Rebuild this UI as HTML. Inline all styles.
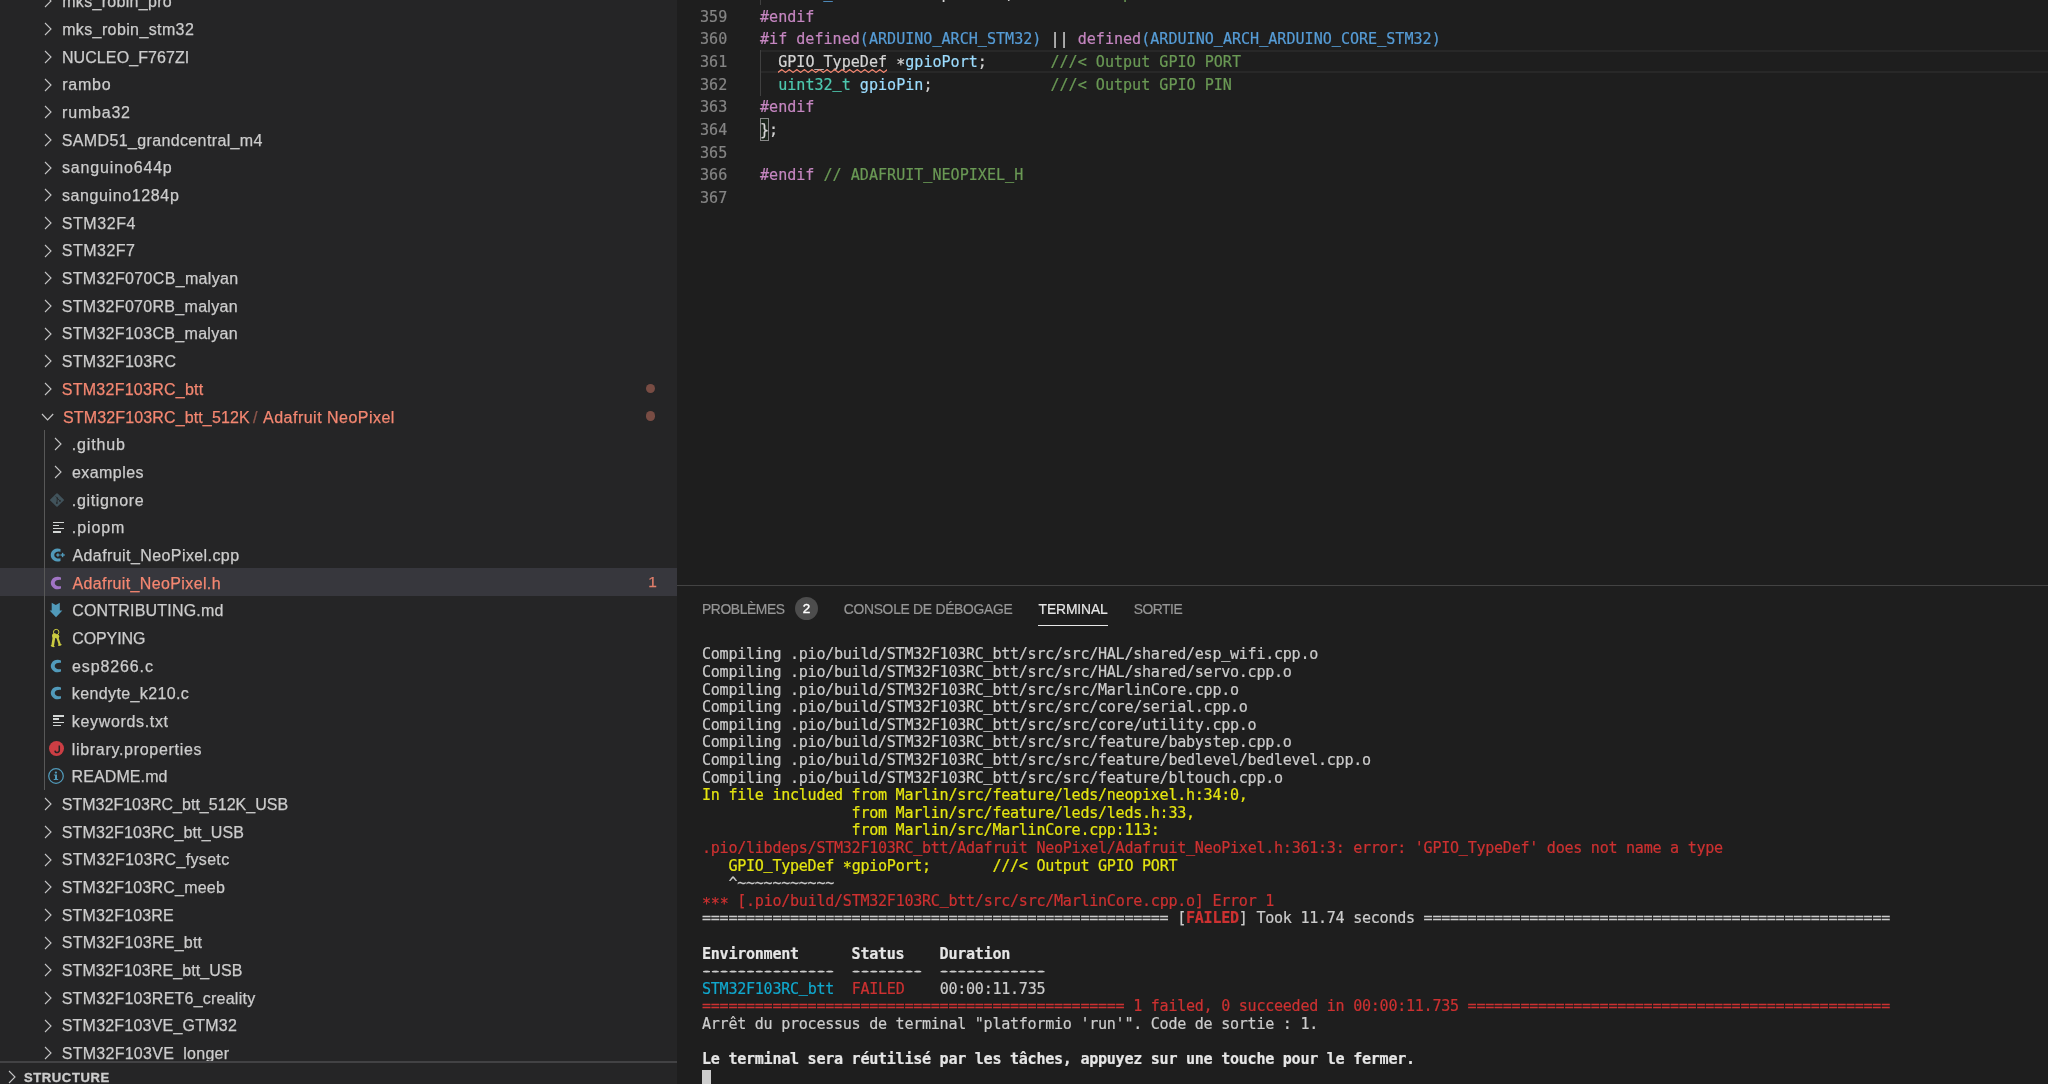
<!DOCTYPE html>
<html lang="fr"><head><meta charset="utf-8"><title>Adafruit_NeoPixel.h</title>
<style>
html,body{margin:0;padding:0;background:#1e1e1e}
body{width:2048px;height:1084px;overflow:hidden;position:relative;font-family:"Liberation Sans",sans-serif;-webkit-font-smoothing:antialiased}
.ab{position:absolute;white-space:pre}
#sbbg{position:absolute;left:0;top:0;width:677px;height:1084px;background:#252526}
#sb{position:absolute;left:0;top:0;width:677px;height:1084px;overflow:hidden;will-change:transform}
#sbl{position:absolute;left:0;top:0;width:677px;height:1061.2px;overflow:hidden}
#ed{position:absolute;left:677px;top:0;width:1371px;height:585px;overflow:hidden;will-change:transform}
#edi,#pni{position:absolute;left:-677px;top:0;width:2048px;height:1084px}
#pn{position:absolute;left:677px;top:0;width:1371px;height:1084px;overflow:hidden;will-change:transform}
.lbl{font-size:16.0px;height:27.68px;line-height:27.68px;margin-top:1.4px;-webkit-text-stroke:0.25px currentColor}
.ic{font-family:"DejaVu Sans","Liberation Sans",sans-serif}
.ln{margin-top:0.8px;-webkit-text-stroke:0.2px currentColor;font-family:"DejaVu Sans Mono","Liberation Mono",monospace;font-size:15.09px;line-height:22.63px;height:22.63px;text-align:right;letter-spacing:-0.05px}
.cl{margin-top:0.8px;-webkit-text-stroke:0.2px currentColor;font-family:"DejaVu Sans Mono","Liberation Mono",monospace;font-size:15.09px;line-height:22.63px;height:22.63px;letter-spacing:-0.003px}
.tl{-webkit-text-stroke:0.2px currentColor;font-family:"DejaVu Sans Mono","Liberation Mono",monospace;font-size:15.09px;line-height:17.60px;height:17.60px;letter-spacing:-0.278px}
.tl b{font-weight:700}
.u{position:relative;top:-1.5px}
.as{position:relative;top:2.8px}
.hy{text-shadow:1.5px 0 0 currentColor,-1.5px 0 0 currentColor}
.tab{font-size:13.83px;height:27.7px;line-height:27.7px;margin-top:1px;-webkit-text-stroke:0.2px currentColor}
</style></head>
<body>
<div id="sbbg"></div>
<div id="sb"><div id="sbl">
<div class="ab" style="left:0;top:568.20px;width:677px;height:27.68px;background:#37373d"></div>
<div class="ab" style="left:43.9px;top:429.80px;width:1.25px;height:359.84px;background:#585858"></div>
<div class="ab lbl" style="left:62.22px;top:-13.08px;color:#cccccc;letter-spacing:0.310px">mks_robin_pro</div>
<svg class="ab" style="left:44.35px;top:-5.54px" width="8.00" height="14.00" viewBox="-1 -1 8.00 14.00"><path d="M0 0 L6.00 6.00 L0 12.00" fill="none" stroke="#c5c5c5" stroke-width="1.1"/></svg>
<div class="ab lbl" style="left:62.15px;top:14.60px;color:#cccccc;letter-spacing:0.384px">mks_robin_stm32</div>
<svg class="ab" style="left:44.35px;top:22.14px" width="8.00" height="14.00" viewBox="-1 -1 8.00 14.00"><path d="M0 0 L6.00 6.00 L0 12.00" fill="none" stroke="#c5c5c5" stroke-width="1.1"/></svg>
<div class="ab lbl" style="left:61.95px;top:42.28px;color:#cccccc;letter-spacing:0.091px">NUCLEO_F767ZI</div>
<svg class="ab" style="left:44.35px;top:49.82px" width="8.00" height="14.00" viewBox="-1 -1 8.00 14.00"><path d="M0 0 L6.00 6.00 L0 12.00" fill="none" stroke="#c5c5c5" stroke-width="1.1"/></svg>
<div class="ab lbl" style="left:62.16px;top:69.96px;color:#cccccc;letter-spacing:0.763px">rambo</div>
<svg class="ab" style="left:44.35px;top:77.50px" width="8.00" height="14.00" viewBox="-1 -1 8.00 14.00"><path d="M0 0 L6.00 6.00 L0 12.00" fill="none" stroke="#c5c5c5" stroke-width="1.1"/></svg>
<div class="ab lbl" style="left:62.12px;top:97.64px;color:#cccccc;letter-spacing:0.791px">rumba32</div>
<svg class="ab" style="left:44.35px;top:105.18px" width="8.00" height="14.00" viewBox="-1 -1 8.00 14.00"><path d="M0 0 L6.00 6.00 L0 12.00" fill="none" stroke="#c5c5c5" stroke-width="1.1"/></svg>
<div class="ab lbl" style="left:61.74px;top:125.32px;color:#cccccc;letter-spacing:0.367px">SAMD51_grandcentral_m4</div>
<svg class="ab" style="left:44.35px;top:132.86px" width="8.00" height="14.00" viewBox="-1 -1 8.00 14.00"><path d="M0 0 L6.00 6.00 L0 12.00" fill="none" stroke="#c5c5c5" stroke-width="1.1"/></svg>
<div class="ab lbl" style="left:61.91px;top:153.00px;color:#cccccc;letter-spacing:0.848px">sanguino644p</div>
<svg class="ab" style="left:44.35px;top:160.54px" width="8.00" height="14.00" viewBox="-1 -1 8.00 14.00"><path d="M0 0 L6.00 6.00 L0 12.00" fill="none" stroke="#c5c5c5" stroke-width="1.1"/></svg>
<div class="ab lbl" style="left:61.90px;top:180.68px;color:#cccccc;letter-spacing:0.621px">sanguino1284p</div>
<svg class="ab" style="left:44.35px;top:188.22px" width="8.00" height="14.00" viewBox="-1 -1 8.00 14.00"><path d="M0 0 L6.00 6.00 L0 12.00" fill="none" stroke="#c5c5c5" stroke-width="1.1"/></svg>
<div class="ab lbl" style="left:61.73px;top:208.36px;color:#cccccc;letter-spacing:0.572px">STM32F4</div>
<svg class="ab" style="left:44.35px;top:215.90px" width="8.00" height="14.00" viewBox="-1 -1 8.00 14.00"><path d="M0 0 L6.00 6.00 L0 12.00" fill="none" stroke="#c5c5c5" stroke-width="1.1"/></svg>
<div class="ab lbl" style="left:61.74px;top:236.04px;color:#cccccc;letter-spacing:0.503px">STM32F7</div>
<svg class="ab" style="left:44.35px;top:243.58px" width="8.00" height="14.00" viewBox="-1 -1 8.00 14.00"><path d="M0 0 L6.00 6.00 L0 12.00" fill="none" stroke="#c5c5c5" stroke-width="1.1"/></svg>
<div class="ab lbl" style="left:61.72px;top:263.72px;color:#cccccc;letter-spacing:0.339px">STM32F070CB_malyan</div>
<svg class="ab" style="left:44.35px;top:271.26px" width="8.00" height="14.00" viewBox="-1 -1 8.00 14.00"><path d="M0 0 L6.00 6.00 L0 12.00" fill="none" stroke="#c5c5c5" stroke-width="1.1"/></svg>
<div class="ab lbl" style="left:61.73px;top:291.40px;color:#cccccc;letter-spacing:0.303px">STM32F070RB_malyan</div>
<svg class="ab" style="left:44.35px;top:298.94px" width="8.00" height="14.00" viewBox="-1 -1 8.00 14.00"><path d="M0 0 L6.00 6.00 L0 12.00" fill="none" stroke="#c5c5c5" stroke-width="1.1"/></svg>
<div class="ab lbl" style="left:61.74px;top:319.08px;color:#cccccc;letter-spacing:0.302px">STM32F103CB_malyan</div>
<svg class="ab" style="left:44.35px;top:326.62px" width="8.00" height="14.00" viewBox="-1 -1 8.00 14.00"><path d="M0 0 L6.00 6.00 L0 12.00" fill="none" stroke="#c5c5c5" stroke-width="1.1"/></svg>
<div class="ab lbl" style="left:61.72px;top:346.76px;color:#cccccc;letter-spacing:0.308px">STM32F103RC</div>
<svg class="ab" style="left:44.35px;top:354.30px" width="8.00" height="14.00" viewBox="-1 -1 8.00 14.00"><path d="M0 0 L6.00 6.00 L0 12.00" fill="none" stroke="#c5c5c5" stroke-width="1.1"/></svg>
<div class="ab lbl" style="left:61.77px;top:374.44px;color:#f48771;letter-spacing:0.258px">STM32F103RC_btt</div>
<svg class="ab" style="left:44.35px;top:381.98px" width="8.00" height="14.00" viewBox="-1 -1 8.00 14.00"><path d="M0 0 L6.00 6.00 L0 12.00" fill="none" stroke="#c5c5c5" stroke-width="1.1"/></svg>
<div class="ab lbl" style="left:63.05px;top:402.12px;color:#f48771;letter-spacing:0.132px">STM32F103RC_btt_512K</div>
<svg class="ab" style="left:41.30px;top:412.96px" width="13.20" height="7.80" viewBox="-1 -1 13.20 7.80"><path d="M0 0 L5.60 5.80 L11.20 0" fill="none" stroke="#c5c5c5" stroke-width="1.2"/></svg>
<div class="ab lbl" style="left:253.0px;top:402.12px;color:#f48771;opacity:.5">/</div>
<div class="ab lbl" style="left:263.08px;top:402.12px;color:#f48771;letter-spacing:0.479px">Adafruit NeoPixel</div>
<div class="ab lbl" style="left:71.77px;top:429.80px;color:#cccccc;letter-spacing:0.850px">.github</div>
<svg class="ab" style="left:53.90px;top:437.34px" width="8.00" height="14.00" viewBox="-1 -1 8.00 14.00"><path d="M0 0 L6.00 6.00 L0 12.00" fill="none" stroke="#c5c5c5" stroke-width="1.1"/></svg>
<div class="ab lbl" style="left:72.04px;top:457.48px;color:#cccccc;letter-spacing:0.420px">examples</div>
<svg class="ab" style="left:53.90px;top:465.02px" width="8.00" height="14.00" viewBox="-1 -1 8.00 14.00"><path d="M0 0 L6.00 6.00 L0 12.00" fill="none" stroke="#c5c5c5" stroke-width="1.1"/></svg>
<div class="ab lbl" style="left:71.78px;top:485.16px;color:#cccccc;letter-spacing:0.668px">.gitignore</div>
<svg class="ab" style="left:48.50px;top:491.80px" width="16" height="16" viewBox="-8 -8 16 16"><rect x="-5.1" y="-5.1" width="10.2" height="10.2" rx="0.9" transform="scale(1.03 0.97) rotate(45)" fill="#41535b"/><path d="M-1.3 -3.6 L0.4 -1.9 L-0.1 3.0 M0.4 -1.4 L2.9 0.7" stroke="#252526" stroke-width="0.85" fill="none"/><circle cx="-0.1" cy="3.1" r="0.85" fill="#252526"/><circle cx="3.0" cy="0.9" r="0.85" fill="#252526"/><circle cx="0.4" cy="-1.8" r="0.8" fill="#252526"/></svg>
<div class="ab lbl" style="left:71.76px;top:512.84px;color:#cccccc;letter-spacing:0.935px">.piopm</div>
<div class="ab" style="left:53.40px;top:521.68px;width:10.5px;height:1.3px;background:#d4d7d6"></div><div class="ab" style="left:53.40px;top:524.68px;width:5.9px;height:1.3px;background:#d4d7d6"></div><div class="ab" style="left:53.40px;top:527.88px;width:10.5px;height:1.3px;background:#d4d7d6"></div><div class="ab" style="left:53.40px;top:531.28px;width:7.5px;height:1.3px;background:#d4d7d6"></div>
<div class="ab lbl" style="left:72.47px;top:540.52px;color:#cccccc;letter-spacing:0.414px">Adafruit_NeoPixel.cpp</div>
<svg class="ab" style="left:46.50px;top:544.66px" width="20" height="20" viewBox="-10 -10 20 20"><path d="M3.5 -5.9 A6.8 6.55 0 1 0 3.5 5.9 L3.5 3.3 A4.6 3.55 0 1 1 3.5 -3.3 Z" transform="translate(0 0)" fill="#519aba"/><rect x="-0.80" y="-0.65" width="3.4" height="1.3" fill="#519aba"/><rect x="0.25" y="-1.70" width="1.3" height="3.4" fill="#519aba"/><rect x="3.45" y="-0.70" width="4.3" height="1.4" fill="#519aba"/><rect x="4.90" y="-2.15" width="1.4" height="4.3" fill="#519aba"/></svg>
<div class="ab lbl" style="left:72.51px;top:568.20px;color:#f48771;letter-spacing:0.369px">Adafruit_NeoPixel.h</div>
<svg class="ab" style="left:46.15px;top:572.64px" width="20" height="20" viewBox="-10 -10 20 20"><path d="M5 -5.6 A7 6.3 0 1 0 5 5.6 L5 3.2 A5 3.32 0 1 1 5 -3.2 Z" fill="#a074c4"/></svg>
<div class="ab lbl" style="left:72.16px;top:595.88px;color:#cccccc;letter-spacing:0.201px">CONTRIBUTING.md</div>
<svg class="ab" style="left:48.40px;top:602.22px" width="16" height="16" viewBox="-8 -8 16 16"><path d="M-4.3 -7.2 L-0.2 -5 L3.8 -7.2 L3.8 0.4 L6.4 0.4 L0 7.2 L-6.4 0.4 L-4.3 0.4 Z" fill="#519aba"/></svg>
<div class="ab lbl" style="left:72.17px;top:623.56px;color:#cccccc;letter-spacing:-0.071px">COPYING</div>
<svg class="ab" style="left:48.40px;top:627.70px" width="16" height="20" viewBox="-8 -10 16 20"><circle cx="0.2" cy="-5.9" r="2.75" fill="none" stroke="#cbcb41" stroke-width="1.0"/><circle cx="-1.5" cy="-2.2" r="2.5" fill="#cbcb41"/><circle cx="1.3" cy="-1.6" r="2.0" fill="#cbcb41"/><path d="M-1.9 -1.5 L-3.3 7.4" stroke="#cbcb41" stroke-width="2.7" stroke-linecap="round" fill="none"/><path d="M1.2 -1.0 L3.8 6.6" stroke="#cbcb41" stroke-width="2.2" stroke-linecap="round" fill="none"/><path d="M-4.6 7.6 L-2 8.6 M2.6 7.2 L5.0 6.6" stroke="#cbcb41" stroke-width="1.3" stroke-linecap="round" fill="none"/></svg>
<div class="ab lbl" style="left:72.05px;top:651.24px;color:#cccccc;letter-spacing:0.878px">esp8266.c</div>
<svg class="ab" style="left:46.15px;top:655.68px" width="20" height="20" viewBox="-10 -10 20 20"><path d="M5 -5.6 A7 6.3 0 1 0 5 5.6 L5 3.2 A5 3.32 0 1 1 5 -3.2 Z" fill="#519aba"/></svg>
<div class="ab lbl" style="left:71.77px;top:678.92px;color:#cccccc;letter-spacing:0.383px">kendyte_k210.c</div>
<svg class="ab" style="left:46.15px;top:683.36px" width="20" height="20" viewBox="-10 -10 20 20"><path d="M5 -5.6 A7 6.3 0 1 0 5 5.6 L5 3.2 A5 3.32 0 1 1 5 -3.2 Z" fill="#519aba"/></svg>
<div class="ab lbl" style="left:71.77px;top:706.60px;color:#cccccc;letter-spacing:0.666px">keywords.txt</div>
<div class="ab" style="left:53.40px;top:715.44px;width:10.5px;height:1.3px;background:#d4d7d6"></div><div class="ab" style="left:53.40px;top:718.44px;width:5.9px;height:1.3px;background:#d4d7d6"></div><div class="ab" style="left:53.40px;top:721.64px;width:10.5px;height:1.3px;background:#d4d7d6"></div><div class="ab" style="left:53.40px;top:725.04px;width:7.5px;height:1.3px;background:#d4d7d6"></div>
<div class="ab lbl" style="left:71.75px;top:734.28px;color:#cccccc;letter-spacing:0.694px">library.properties</div>
<div class="ab" style="left:48.90px;top:740.92px;width:15.2px;height:15.2px;border-radius:50%;background:#cc3e44"></div><svg class="ab" style="left:48.50px;top:740.52px" width="16" height="16" viewBox="-8 -8 16 16"><path d="M2.3 -3.5 L2.3 1.3 A2.1 2.1 0 0 1 -2.0 1.6" fill="none" stroke="#252526" stroke-width="1.5"/></svg>
<div class="ab lbl" style="left:71.53px;top:761.96px;color:#cccccc;letter-spacing:0.103px">README.md</div>
<svg class="ab" style="left:46.90px;top:767.00px" width="18" height="18" viewBox="-9 -9 18 18"><circle cx="0" cy="0" r="7.3" fill="none" stroke="#519aba" stroke-width="1.25"/><circle cx="-0.1" cy="-3.4" r="1.15" fill="#519aba"/><path d="M-2.1 -1.5 L1.0 -1.5 L1.0 3.0 L2.2 3.0 L2.2 4.1 L-2.3 4.1 L-2.3 3.0 L-1.0 3.0 L-1.0 -0.4 L-2.1 -0.4 Z" fill="#519aba"/></svg>
<div class="ab lbl" style="left:61.72px;top:789.64px;color:#cccccc;letter-spacing:0.021px">STM32F103RC_btt_512K_USB</div>
<svg class="ab" style="left:44.35px;top:797.18px" width="8.00" height="14.00" viewBox="-1 -1 8.00 14.00"><path d="M0 0 L6.00 6.00 L0 12.00" fill="none" stroke="#c5c5c5" stroke-width="1.1"/></svg>
<div class="ab lbl" style="left:61.73px;top:817.32px;color:#cccccc;letter-spacing:0.140px">STM32F103RC_btt_USB</div>
<svg class="ab" style="left:44.35px;top:824.86px" width="8.00" height="14.00" viewBox="-1 -1 8.00 14.00"><path d="M0 0 L6.00 6.00 L0 12.00" fill="none" stroke="#c5c5c5" stroke-width="1.1"/></svg>
<div class="ab lbl" style="left:61.73px;top:845.00px;color:#cccccc;letter-spacing:0.329px">STM32F103RC_fysetc</div>
<svg class="ab" style="left:44.35px;top:852.54px" width="8.00" height="14.00" viewBox="-1 -1 8.00 14.00"><path d="M0 0 L6.00 6.00 L0 12.00" fill="none" stroke="#c5c5c5" stroke-width="1.1"/></svg>
<div class="ab lbl" style="left:61.73px;top:872.68px;color:#cccccc;letter-spacing:0.200px">STM32F103RC_meeb</div>
<svg class="ab" style="left:44.35px;top:880.22px" width="8.00" height="14.00" viewBox="-1 -1 8.00 14.00"><path d="M0 0 L6.00 6.00 L0 12.00" fill="none" stroke="#c5c5c5" stroke-width="1.1"/></svg>
<div class="ab lbl" style="left:61.72px;top:900.36px;color:#cccccc;letter-spacing:0.177px">STM32F103RE</div>
<svg class="ab" style="left:44.35px;top:907.90px" width="8.00" height="14.00" viewBox="-1 -1 8.00 14.00"><path d="M0 0 L6.00 6.00 L0 12.00" fill="none" stroke="#c5c5c5" stroke-width="1.1"/></svg>
<div class="ab lbl" style="left:61.72px;top:928.04px;color:#cccccc;letter-spacing:0.241px">STM32F103RE_btt</div>
<svg class="ab" style="left:44.35px;top:935.58px" width="8.00" height="14.00" viewBox="-1 -1 8.00 14.00"><path d="M0 0 L6.00 6.00 L0 12.00" fill="none" stroke="#c5c5c5" stroke-width="1.1"/></svg>
<div class="ab lbl" style="left:61.72px;top:955.72px;color:#cccccc;letter-spacing:0.112px">STM32F103RE_btt_USB</div>
<svg class="ab" style="left:44.35px;top:963.26px" width="8.00" height="14.00" viewBox="-1 -1 8.00 14.00"><path d="M0 0 L6.00 6.00 L0 12.00" fill="none" stroke="#c5c5c5" stroke-width="1.1"/></svg>
<div class="ab lbl" style="left:61.73px;top:983.40px;color:#cccccc;letter-spacing:0.233px">STM32F103RET6_creality</div>
<svg class="ab" style="left:44.35px;top:990.94px" width="8.00" height="14.00" viewBox="-1 -1 8.00 14.00"><path d="M0 0 L6.00 6.00 L0 12.00" fill="none" stroke="#c5c5c5" stroke-width="1.1"/></svg>
<div class="ab lbl" style="left:61.73px;top:1011.08px;color:#cccccc;letter-spacing:0.216px">STM32F103VE_GTM32</div>
<svg class="ab" style="left:44.35px;top:1018.62px" width="8.00" height="14.00" viewBox="-1 -1 8.00 14.00"><path d="M0 0 L6.00 6.00 L0 12.00" fill="none" stroke="#c5c5c5" stroke-width="1.1"/></svg>
<div class="ab lbl" style="left:61.72px;top:1038.76px;color:#cccccc;letter-spacing:0.272px">STM32F103VE_longer</div>
<svg class="ab" style="left:44.35px;top:1046.30px" width="8.00" height="14.00" viewBox="-1 -1 8.00 14.00"><path d="M0 0 L6.00 6.00 L0 12.00" fill="none" stroke="#c5c5c5" stroke-width="1.1"/></svg>
<div class="ab" style="left:645.60px;top:383.68px;width:9.4px;height:9.4px;border-radius:50%;background:#f48771;opacity:.40"></div>
<div class="ab" style="left:645.60px;top:411.36px;width:9.4px;height:9.4px;border-radius:50%;background:#f48771;opacity:.40"></div>
<div class="ab lbl" style="left:640px;width:25.2px;text-align:center;top:566.20px;color:#f48771;font-size:15.4px;opacity:.9">1</div>
</div>
<div class="ab" style="left:0;top:1061.2px;width:677px;height:23px;background:#252526"></div>
<div class="ab" style="left:0;top:1061.2px;width:677px;height:1.9px;background:#424244"></div>
<div class="ab" style="left:24px;top:1063.9px;height:27.7px;line-height:27.7px;font-size:13.0px;font-weight:700;color:#cccccc;letter-spacing:0.62px;-webkit-text-stroke:0.35px #cccccc">STRUCTURE</div>
<svg class="ab" style="left:8.00px;top:1069.50px" width="8.00" height="14.00" viewBox="-1 -1 8.00 14.00"><path d="M0 0 L6.00 6.00 L0 12.00" fill="none" stroke="#c5c5c5" stroke-width="1.1"/></svg>
</div>
<div id="ed"><div id="edi">
<div class="ab" style="left:760.0px;top:50.30px;width:1288.0px;height:22.63px;box-sizing:border-box;border-top:2.7px solid #282828;border-bottom:2.7px solid #282828"></div>
<div class="ab" style="left:760px;top:50.30px;width:1.25px;height:45.26px;background:#404040"></div>
<div class="ab" style="left:760px;top:-17.59px;width:1.25px;height:22.63px;background:#404040"></div>
<div class="ab" style="left:759.6px;top:118.19px;width:9.0px;height:22.63px;box-sizing:border-box;border:1.25px solid #888;background:rgba(0,100,0,.1)"></div>
<div class="ab ln" style="left:690px;width:37.2px;top:-17.59px;color:#858585">358</div>
<div class="ab cl" style="left:760.0px;top:-17.59px"><span style="color:#d4d4d4">  </span><span style="color:#569cd6">uint8<span class="u">_</span>t</span><span style="color:#d4d4d4">           </span><span style="color:#d4d4d4">pinMask</span><span style="color:#d4d4d4">;    </span><span style="color:#6a9955">///&lt; Output PORT bitmask</span></div>
<div class="ab ln" style="left:690px;width:37.2px;top:5.04px;color:#858585">359</div>
<div class="ab cl" style="left:760.0px;top:5.04px"><span style="color:#c586c0">#endif</span></div>
<div class="ab ln" style="left:690px;width:37.2px;top:27.67px;color:#858585">360</div>
<div class="ab cl" style="left:760.0px;top:27.67px"><span style="color:#c586c0">#if defined</span><span style="color:#569cd6">(ARDUINO<span class="u">_</span>ARCH<span class="u">_</span>STM32)</span><span style="color:#d4d4d4"> || </span><span style="color:#c586c0">defined</span><span style="color:#569cd6">(ARDUINO<span class="u">_</span>ARCH<span class="u">_</span>ARDUINO<span class="u">_</span>CORE<span class="u">_</span>STM32)</span></div>
<div class="ab ln" style="left:690px;width:37.2px;top:50.30px;color:#858585">361</div>
<div class="ab cl" style="left:760.0px;top:50.30px"><span style="color:#d4d4d4">  </span><span class="sq" style="color:#d4d4d4">GPIO<span class="u">_</span>TypeDef</span><span style="color:#d4d4d4"> <span class="as">*</span></span><span style="color:#9cdcfe">gpioPort</span><span style="color:#d4d4d4">;       </span><span style="color:#6a9955">///&lt; Output GPIO PORT</span></div>
<div class="ab ln" style="left:690px;width:37.2px;top:72.93px;color:#858585">362</div>
<div class="ab cl" style="left:760.0px;top:72.93px"><span style="color:#d4d4d4">  </span><span style="color:#4ec9b0">uint32<span class="u">_</span>t</span><span style="color:#d4d4d4"> </span><span style="color:#9cdcfe">gpioPin</span><span style="color:#d4d4d4">;             </span><span style="color:#6a9955">///&lt; Output GPIO PIN</span></div>
<div class="ab ln" style="left:690px;width:37.2px;top:95.56px;color:#858585">363</div>
<div class="ab cl" style="left:760.0px;top:95.56px"><span style="color:#c586c0">#endif</span></div>
<div class="ab ln" style="left:690px;width:37.2px;top:118.19px;color:#858585">364</div>
<div class="ab cl" style="left:760.0px;top:118.19px"><span style="color:#d4d4d4">};</span></div>
<div class="ab ln" style="left:690px;width:37.2px;top:140.82px;color:#858585">365</div>
<div class="ab ln" style="left:690px;width:37.2px;top:163.45px;color:#858585">366</div>
<div class="ab cl" style="left:760.0px;top:163.45px"><span style="color:#c586c0">#endif</span><span style="color:#6a9955"> // ADAFRUIT<span class="u">_</span>NEOPIXEL<span class="u">_</span>H</span></div>
<div class="ab ln" style="left:690px;width:37.2px;top:186.08px;color:#858585">367</div>
<svg class="ab" style="left:777.60px;top:69.30px" width="109.40" height="4"><polyline points="0.00,3.40 3.77,0.60 7.54,3.40 11.32,0.60 15.09,3.40 18.86,0.60 22.63,3.40 26.41,0.60 30.18,3.40 33.95,0.60 37.72,3.40 41.50,0.60 45.27,3.40 49.04,0.60 52.81,3.40 56.59,0.60 60.36,3.40 64.13,0.60 67.90,3.40 71.68,0.60 75.45,3.40 79.22,0.60 82.99,3.40 86.77,0.60 90.54,3.40 94.31,0.60 98.08,3.40 101.86,0.60 105.63,3.40 109.40,0.60" fill="none" stroke="#f48771" stroke-width="1.25"/></svg>
</div></div>
<div id="pn"><div id="pni">
<div class="ab" style="left:677px;top:585.0px;width:1371px;height:1.25px;background:#434343"></div>
<div class="ab tab" style="left:701.90px;top:594.80px;color:#969696;letter-spacing:-0.360px">PROBLÈMES</div>
<div class="ab tab" style="left:843.70px;top:594.80px;color:#969696;letter-spacing:-0.254px">CONSOLE DE DÉBOGAGE</div>
<div class="ab tab" style="left:1038.60px;top:594.80px;color:#e7e7e7;letter-spacing:-0.117px">TERMINAL</div>
<div class="ab tab" style="left:1133.80px;top:594.80px;color:#969696;letter-spacing:-0.467px">SORTIE</div>
<div class="ab" style="left:1038.2px;top:624.6px;width:69.8px;height:1.2px;background:#e7e7e7"></div>
<div class="ab" style="left:795.0px;top:597.0px;width:23px;height:23px;border-radius:50%;background:#4d4d4d;color:#fff;font-size:13.4px;line-height:24.8px;-webkit-text-stroke:0.4px #fff;text-align:center;font-family:'Liberation Sans',sans-serif">2</div>
<div class="ab tl" style="left:702px;top:646.40px"><span style="color:#cccccc">Compiling .pio/build/STM32F103RC<span class="u">_</span>btt/src/src/HAL/shared/esp<span class="u">_</span>wifi.cpp.o</span></div>
<div class="ab tl" style="left:702px;top:664.00px"><span style="color:#cccccc">Compiling .pio/build/STM32F103RC<span class="u">_</span>btt/src/src/HAL/shared/servo.cpp.o</span></div>
<div class="ab tl" style="left:702px;top:681.60px"><span style="color:#cccccc">Compiling .pio/build/STM32F103RC<span class="u">_</span>btt/src/src/MarlinCore.cpp.o</span></div>
<div class="ab tl" style="left:702px;top:699.20px"><span style="color:#cccccc">Compiling .pio/build/STM32F103RC<span class="u">_</span>btt/src/src/core/serial.cpp.o</span></div>
<div class="ab tl" style="left:702px;top:716.80px"><span style="color:#cccccc">Compiling .pio/build/STM32F103RC<span class="u">_</span>btt/src/src/core/utility.cpp.o</span></div>
<div class="ab tl" style="left:702px;top:734.40px"><span style="color:#cccccc">Compiling .pio/build/STM32F103RC<span class="u">_</span>btt/src/src/feature/babystep.cpp.o</span></div>
<div class="ab tl" style="left:702px;top:752.00px"><span style="color:#cccccc">Compiling .pio/build/STM32F103RC<span class="u">_</span>btt/src/src/feature/bedlevel/bedlevel.cpp.o</span></div>
<div class="ab tl" style="left:702px;top:769.60px"><span style="color:#cccccc">Compiling .pio/build/STM32F103RC<span class="u">_</span>btt/src/src/feature/bltouch.cpp.o</span></div>
<div class="ab tl" style="left:702px;top:787.20px"><span style="color:#e5e510">In file included from Marlin/src/feature/leds/neopixel.h:34:0,</span></div>
<div class="ab tl" style="left:702px;top:804.80px"><span style="color:#e5e510">                 from Marlin/src/feature/leds/leds.h:33,</span></div>
<div class="ab tl" style="left:702px;top:822.40px"><span style="color:#e5e510">                 from Marlin/src/MarlinCore.cpp:113:</span></div>
<div class="ab tl" style="left:702px;top:840.00px"><span style="color:#cd3131">.pio/libdeps/STM32F103RC<span class="u">_</span>btt/Adafruit NeoPixel/Adafruit<span class="u">_</span>NeoPixel.h:361:3: error: &#x27;GPIO<span class="u">_</span>TypeDef&#x27; does not name a type</span></div>
<div class="ab tl" style="left:702px;top:857.60px"><span style="color:#e5e510">   GPIO<span class="u">_</span>TypeDef <span class="as">*</span>gpioPort;       ///&lt; Output GPIO PORT</span></div>
<div class="ab tl" style="left:702px;top:875.20px"><span style="color:#cccccc">   ^~~~~~~~~~~~</span></div>
<div class="ab tl" style="left:702px;top:892.80px"><span style="color:#cd3131"><span class="as">*</span><span class="as">*</span><span class="as">*</span> [.pio/build/STM32F103RC<span class="u">_</span>btt/src/src/MarlinCore.cpp.o] Error 1</span></div>
<div class="ab tl" style="left:702px;top:910.40px"><span style="color:#cccccc">===================================================== [</span><b style="color:#cd3131">FAILED</b><span style="color:#cccccc">] Took 11.74 seconds =====================================================</span></div>
<div class="ab tl" style="left:702px;top:945.60px"><b style="color:#e5e5e5">Environment      Status    Duration</b></div>
<div class="ab tl" style="left:702px;top:963.20px"><span class="hy" style="color:#cccccc">---------------  --------  ------------</span></div>
<div class="ab tl" style="left:702px;top:980.80px"><span style="color:#11a8cd">STM32F103RC<span class="u">_</span>btt</span><span style="color:#cccccc">  </span><span style="color:#cd3131">FAILED</span><span style="color:#cccccc">    00:00:11.735</span></div>
<div class="ab tl" style="left:702px;top:998.40px"><span style="color:#cd3131">================================================ 1 failed, 0 succeeded in 00:00:11.735 ================================================</span></div>
<div class="ab tl" style="left:702px;top:1016.00px"><span style="color:#cccccc">Arrêt du processus de terminal &quot;platformio &#x27;run&#x27;&quot;. Code de sortie : 1.</span></div>
<div class="ab tl" style="left:702px;top:1051.20px"><b style="color:#e5e5e5">Le terminal sera réutilisé par les tâches, appuyez sur une touche pour le fermer.</b></div>
<div class="ab" style="left:702.4px;top:1070.00px;width:8.6px;height:17.6px;background:#cccccc"></div>
</div></div>
</body></html>
